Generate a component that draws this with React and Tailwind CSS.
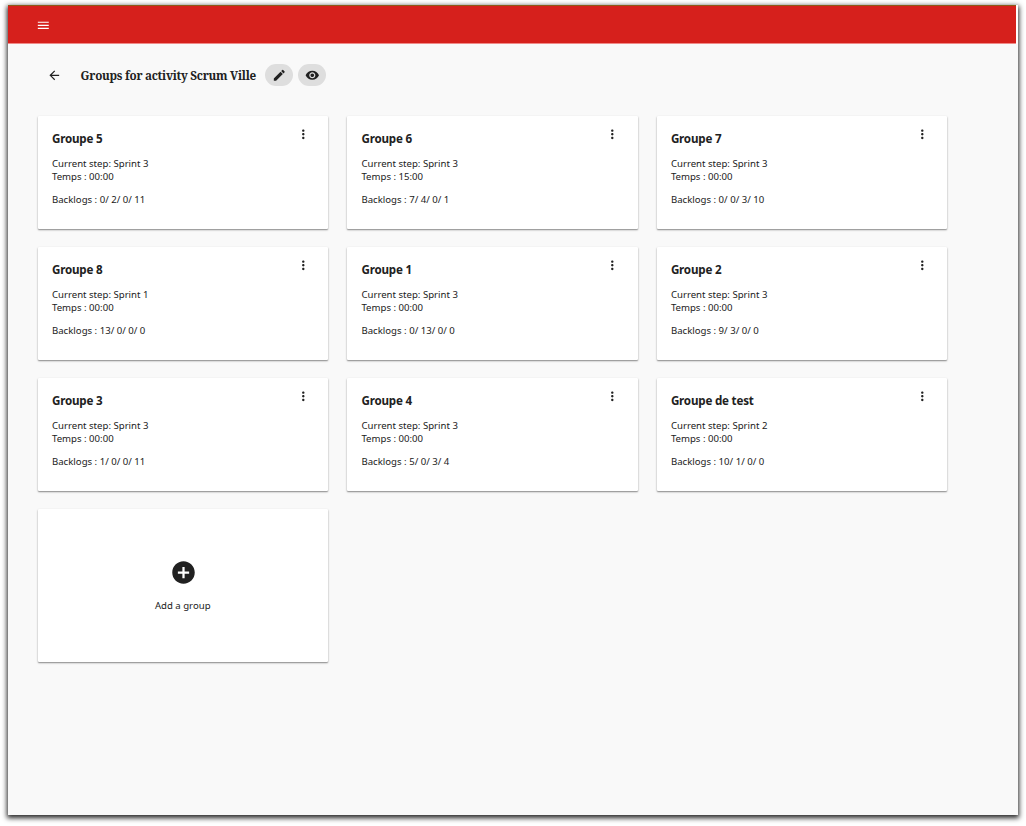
import { MdMenu, MdArrowBack, MdEdit, MdVisibility, MdMoreVert, MdAddCircle } from 'react-icons/md';

const groups = [
  { name: 'Groupe 5', step: 'Sprint 3', time: '00:00', backlogs: '0/ 2/ 0/ 11' },
  { name: 'Groupe 6', step: 'Sprint 3', time: '15:00', backlogs: '7/ 4/ 0/ 1' },
  { name: 'Groupe 7', step: 'Sprint 3', time: '00:00', backlogs: '0/ 0/ 3/ 10' },
  { name: 'Groupe 8', step: 'Sprint 1', time: '00:00', backlogs: '13/ 0/ 0/ 0' },
  { name: 'Groupe 1', step: 'Sprint 3', time: '00:00', backlogs: '0/ 13/ 0/ 0' },
  { name: 'Groupe 2', step: 'Sprint 3', time: '00:00', backlogs: '9/ 3/ 0/ 0' },
  { name: 'Groupe 3', step: 'Sprint 3', time: '00:00', backlogs: '1/ 0/ 0/ 11' },
  { name: 'Groupe 4', step: 'Sprint 3', time: '00:00', backlogs: '5/ 0/ 3/ 4' },
  { name: 'Groupe de test', step: 'Sprint 2', time: '00:00', backlogs: '10/ 1/ 0/ 0' },
];

function GroupCard({ group }) {
  return (
    <article className="flex h-[113px] items-start justify-between rounded-[1px] bg-white pt-[14px] pr-[18px] pl-[14px] shadow-[0_1px_2px_rgba(0,0,0,0.38),0_1px_1px_rgba(0,0,0,0.12)]">
      <div>
        <h2 className="mt-[1px] text-[11.6px] leading-[16px] font-bold tracking-[-0.2px]">{group.name}</h2>
        <p className="mt-[10px] text-[9.6px] leading-[13px]">Current step: {group.step}</p>
        <p className="text-[9.6px] leading-[13px]">Temps : {group.time}</p>
        <p className="mt-[10px] text-[9.6px] leading-[13px]">Backlogs : {group.backlogs}</p>
      </div>
      <button aria-label="Options" className="-mt-[3px]">
        <MdMoreVert className="size-[14.6px]" />
      </button>
    </article>
  );
}

export default function App() {
  return (
    <div className="h-[826px] w-[1026px] overflow-hidden bg-white pt-[5px] pl-2 font-['Noto_Sans',sans-serif] text-[#212121]">
      <div className="h-[810px] w-[1010px] bg-[#f9f9f9] shadow-[0_2px_5px_1px_rgba(0,0,0,0.85)]">
        <div className="bg-white pr-[2px]">
          <header className="flex h-[39px] items-center border-t border-b border-t-[#8d5a18] border-b-[#f08a88] bg-[#d6201c] pt-[2px] pl-[28.3px] text-white">
            <MdMenu className="size-[14.6px]" />
          </header>
        </div>
        <div className="flex h-[72.4px] items-center pb-[10px] pl-[39px]">
          <MdArrowBack className="size-[14.6px]" />
          <h1 className="ml-[19px] w-[176px] pt-[2px] text-[11.7px] font-bold tracking-[-0.27px] whitespace-nowrap font-['Noto_Serif','DejaVu_Serif',serif]">
            Groups for activity Scrum Ville
          </h1>
          <button aria-label="Edit" className="ml-[8.5px] flex h-[22px] w-[28px] items-center justify-center rounded-full bg-[#dedede]">
            <MdEdit className="size-[14.6px]" />
          </button>
          <button aria-label="View" className="ml-[5px] flex h-[22px] w-[28px] items-center justify-center rounded-full bg-[#dedede]">
            <MdVisibility className="size-[14.6px]" />
          </button>
        </div>
        <main className="grid w-[939.4px] grid-cols-3 gap-x-[19px] gap-y-[18px] pl-[30px]">
          {groups.map((group) => (
            <GroupCard key={group.name} group={group} />
          ))}
          <button className="flex h-[153px] flex-col items-center rounded-[1px] bg-white pt-[50px] shadow-[0_1px_2px_rgba(0,0,0,0.38),0_1px_1px_rgba(0,0,0,0.12)]">
            <MdAddCircle className="size-[27px]" />
            <span className="mt-[13px] mr-[1px] text-[9.6px] leading-[13px]">Add a group</span>
          </button>
        </main>
      </div>
    </div>
  );
}
